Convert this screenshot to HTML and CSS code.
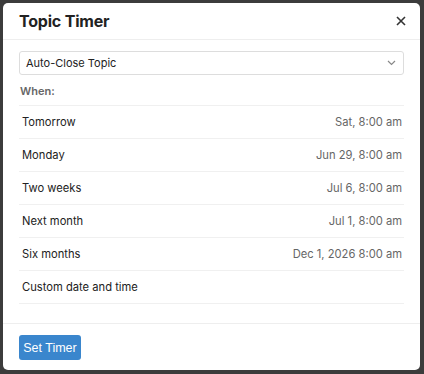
FILE: index.html
```html
<!DOCTYPE html>
<html lang="en">
  <head>
    <meta charset="UTF-8" />
    <title>Topic Timer</title>
    <link rel="stylesheet" href="styles.css">
  </head>
  <body>
    <div class="modal">
      <div class="modal-header">
        <h2>Topic Timer</h2>
        <button class="close-btn" aria-label="close">
          <svg width="10" height="10" viewBox="0 0 10 10">
            <path d="M1 1 L9 9 M9 1 L1 9" stroke="#333" stroke-width="1.6" />
          </svg>
        </button>
      </div>

      <div class="modal-body">
        <div class="select-box">
          <span>Auto-Close Topic</span>
          <svg width="9" height="6" viewBox="0 0 9 6">
            <path d="M1 1 L4.5 4.5 L8 1" fill="none" stroke="#888" stroke-width="1.2" />
          </svg>
        </div>

        <div class="when-label">When:</div>

        <ul class="options">
          <li><span class="name">Tomorrow</span><span class="date">Sat, 8:00 am</span></li>
          <li><span class="name">Monday</span><span class="date">Jun 29, 8:00 am</span></li>
          <li><span class="name">Two weeks</span><span class="date">Jul 6, 8:00 am</span></li>
          <li><span class="name">Next month</span><span class="date">Jul 1, 8:00 am</span></li>
          <li><span class="name">Six months</span><span class="date">Dec 1, 2026 8:00 am</span></li>
          <li><span class="name">Custom date and time</span></li>
        </ul>
      </div>

      <div class="modal-footer">
        <button class="set-btn">Set Timer</button>
      </div>
    </div>
  </body>
</html>
```

FILE: styles.css
```css
* {
  box-sizing: border-box;
}

body {
  background-color: #3c3c3c;
  margin: 0;
  padding: 3px;
  font-family: Inter, "Noto Sans", sans-serif;
}

.modal {
  width: 417px;
  height: 367px;
  background-color: #fff;
  border-radius: 5px;
  display: flex;
  flex-direction: column;
}

.modal-header {
  height: 37px;
  flex-shrink: 0;
  display: flex;
  align-items: center;
  justify-content: space-between;
  padding: 0 14px 0 16px;
  border-bottom: 1px solid #eee;
}

.modal-header h2 {
  margin: 0;
  font-size: 16px;
  font-weight: 700;
  color: #222;
  letter-spacing: -0.2px;
}

.close-btn {
  border: none;
  background: none;
  padding: 0;
  width: 10px;
  height: 10px;
  display: flex;
}

.modal-body {
  padding: 11px 16px 0;
  flex: 1;
}

.select-box {
  height: 24px;
  border: 1px solid #ddd;
  border-radius: 3px;
  display: flex;
  align-items: center;
  justify-content: space-between;
  padding: 0 7px 0 6px;
  font-size: 11px;
  color: #222;
}

.when-label {
  font-size: 11px;
  font-weight: 600;
  color: #666;
  padding: 9px 0 0 1px;
  height: 30px;
}

.options {
  list-style: none;
  margin: 0;
  padding: 0;
  border-top: 1px solid #f0f0f0;
}

.options li {
  height: 33px;
  display: flex;
  align-items: center;
  justify-content: space-between;
  padding: 0 2px 0 3px;
  border-bottom: 1px solid #f0f0f0;
  font-size: 11.2px;
}

.name {
  color: #222;
}

.date {
  color: #666;
}

.modal-footer {
  flex-shrink: 0;
  border-top: 1px solid #eee;
  height: 47px;
  padding: 11px 16px 0;
}

.set-btn {
  height: 25px;
  width: 62px;
  padding: 0;
  background-color: #3a86cd;
  color: #fff;
  border: none;
  border-radius: 3px;
  font-family: "Liberation Sans", Arial, sans-serif;
  font-size: 12.5px;
}
```
